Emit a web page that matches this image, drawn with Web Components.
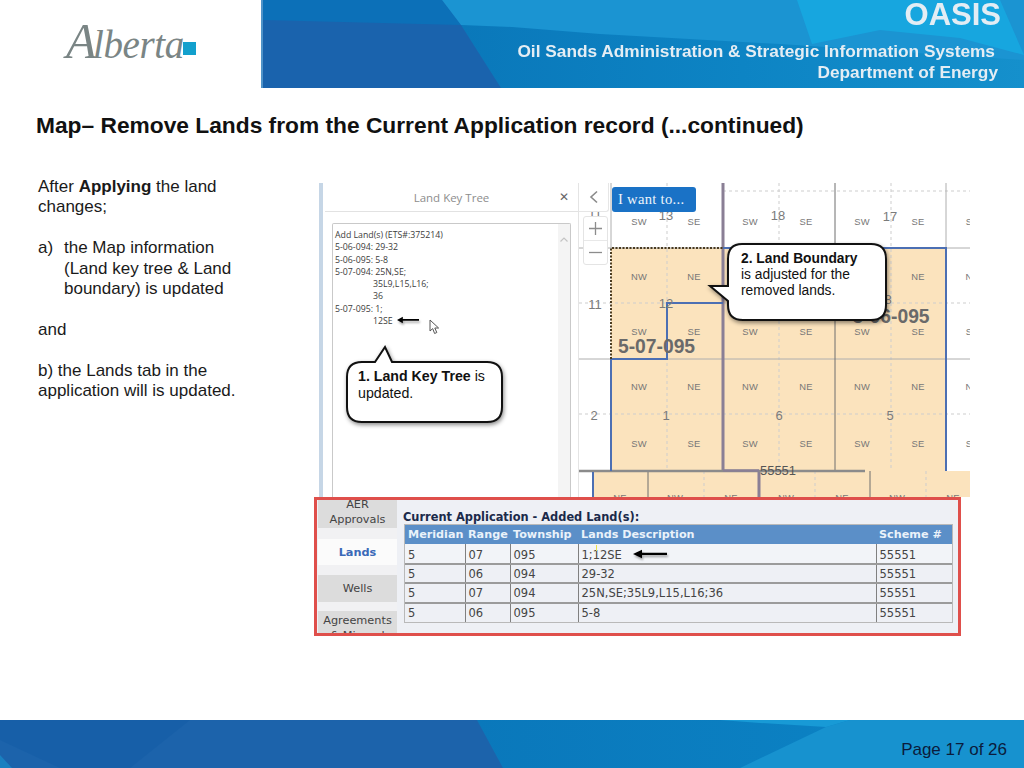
<!DOCTYPE html>
<html lang="en"><head><meta charset="utf-8"><title>OASIS Map</title>
<style>
html,body{margin:0;padding:0;background:#fff}
body{width:1024px;height:768px;overflow:hidden;display:flex;flex-direction:column;font-family:"Liberation Sans",Arial,sans-serif}
</style></head><body>
<oasis-header></oasis-header>
<slide-title>Map– Remove Lands from the Current Application record (...continued)</slide-title>
<slide-body>
  <slide-notes>
    <p-line>After <b>Applying</b> the land changes;</p-line>
    <note-item label="a)">the Map information (Land key tree &amp; Land boundary) is updated</note-item>
    <p-line>and</p-line>
    <p-line>b) the Lands tab in the application will is updated.</p-line>
  </slide-notes>
  <slide-figure>
    <land-tree></land-tree>
    <land-map></land-map>
    <lands-table></lands-table>
  </slide-figure>
</slide-body>
<oasis-footer>Page 17 of 26</oasis-footer>
<script>
function def(name, html, setup){
  customElements.define(name, class extends HTMLElement{
    constructor(){super();this.attachShadow({mode:'open'}).innerHTML=html;}
    connectedCallback(){ if(setup) setup(this.shadowRoot,this); }
  });
}
const ARROW=`<svg width="100%" height="100%" viewBox="0 0 34 10" preserveAspectRatio="none" style="filter:drop-shadow(1px 2px 1px rgba(0,0,0,.35));display:block"><path d="M0 5 L9 .8 L9 3.8 L34 3.8 L34 6 L9 6 L9 9.2 Z" fill="#000"/></svg>`;

def('oasis-header',`<style>
:host{display:flex;height:88px;flex:none;background:#fff}
.logo{width:261px;flex:none;display:flex;align-items:flex-start;padding:21px 0 0 66px;box-sizing:border-box;gap:0}
.word{font:italic 400 39px/40px "Liberation Serif",serif;color:#7a8585;letter-spacing:-.4px;white-space:nowrap}
.word i{font-size:50px;line-height:40px;font-style:italic;letter-spacing:-3.500px}
.sq{width:13px;height:13px;background:#12a0cd;margin:21px 0 0 -1px;flex:none}
.band{flex:1;position:relative;display:flex;flex-direction:column;align-items:flex-end;color:#eaf2f8;font-weight:700;overflow:hidden;filter:blur(.25px)}
svg{position:absolute;inset:0}
.t{position:relative}
.o{font-size:31px;line-height:30px;margin:0 23px 0 0;color:#e3edf4}
.s{font-size:17.3px;line-height:21px;margin:11px 29px 0 0;color:#e4edf4}
.d{font-size:17.3px;line-height:21px;margin:0 26px 0 0;color:#e4edf4}
</style>
<div class="logo"><div class="word"><i>A</i>lberta</div><div class="sq"></div></div>
<div class="band">
<svg viewBox="261 0 763 88" width="763" height="88"><defs><linearGradient id="g" x1="0" x2="1"><stop offset="0" stop-color="#0a78ba"/><stop offset=".5" stop-color="#0d84c4"/><stop offset="1" stop-color="#1590cc"/></linearGradient></defs>
<rect x="261" width="763" height="88" fill="#1a63ad"/>
<rect x="261" width="2" height="88" fill="#4f93c9"/>
<polygon points="263,0 442,0 461,25 263,20" fill="#0c70b8"/>
<polygon points="461,25 1024,25 1024,88 501,88" fill="url(#g)"/>
<polygon points="442,0 1024,0 1024,60 780,44 600,34 512,27 461,25" fill="#1b94d2"/>
<polygon points="797,0 1000,0 1024,55 960,38 880,30 812,44" fill="#17a6df"/>
</svg>
<div class="t o">OASIS</div><div class="t s">Oil Sands Administration &amp; Strategic Information Systems</div><div class="t d">Department of Energy</div>
</div>`);

def('slide-title',`<style>:host{display:block;flex:none;padding:24px 0 0 36px;height:63px;box-sizing:border-box;font-weight:700;font-size:22.75px;line-height:26px;color:#111;white-space:nowrap}</style><slot></slot>`);

def('slide-body',`<style>:host{display:flex;flex:1;min-height:0;align-items:flex-start}</style><slot></slot>`);

def('slide-notes',`<style>:host{display:flex;flex-direction:column;gap:20.4px;width:314px;box-sizing:border-box;padding:26px 70px 0 38px;flex:none;font-size:17px;line-height:20.4px;color:#1a1a1a}</style><slot></slot>`);
def('p-line',`<style>:host{display:block}</style><slot></slot>`);
def('note-item',`<style>:host{display:flex}.l{width:26px;flex:none}</style><span class="l"></span><span><slot></slot></span>`,(r,h)=>{r.querySelector('.l').textContent=h.getAttribute('label')});

def('slide-figure',`<style>:host{display:grid;grid-template-columns:11px 254px 391px;grid-template-rows:314px auto;margin:32px 0 0 0;width:656px;position:relative}
::slotted(land-tree){grid-column:2;grid-row:1}::slotted(land-map){grid-column:3;grid-row:1}::slotted(lands-table){grid-column:1 / -1;grid-row:2}</style><slot></slot>`);

def('call-out',`<style>:host{display:block;position:absolute;box-sizing:border-box;font-family:"Liberation Sans",Arial,sans-serif;color:#111;z-index:3}
svg{position:absolute;left:0;top:0;overflow:visible;filter:drop-shadow(1px 2px 2px rgba(0,0,0,.45))}
.t{position:relative;display:block}</style><svg><path fill="#fff" stroke="#111" stroke-width="2"/></svg><span class="t"><slot></slot></span>`,
(r,h)=>{r.querySelector('path').setAttribute('d',h.getAttribute('shape'));});

def('land-tree',`<style>
:host{display:block;position:relative;height:314px;background:#fff;font-family:"Open Sans",sans-serif;overflow:visible}
.strip{position:absolute;left:-6px;top:0;bottom:0;width:4px;background:#c6d6e6}
.head{height:28px;border-bottom:1px solid #e2e2e2;display:flex;align-items:center;justify-content:center;color:#8d8d8d;font-size:11.5px;position:relative;margin-right:1px}
.x{position:absolute;left:234px;top:6px;font-size:12px;color:#666;line-height:16px}
.rule{position:absolute;right:0;top:0;bottom:0;width:1px;background:#e4e4e4}
.box{position:absolute;left:7px;top:40px;width:239px;height:274px;border:1px solid #c9c9c9;border-bottom:0;border-radius:2px 2px 0 0;box-sizing:border-box;padding:5px 0 0 2px;font-size:8.75px;line-height:12.25px;color:#3c3c3c;white-space:nowrap}
.sb{position:absolute;right:0;top:0;bottom:0;width:12px;background:#f4f4f4}
.sb svg{position:absolute;left:2px;top:13px}
.in{padding-left:38px}
.a{position:absolute;left:64px;top:92px;width:22px;height:8px}
.c{position:absolute;left:96px;top:95px}
</style>
<div class="strip"></div><div class="rule"></div>
<div class="head">Land Key Tree<span class="x">✕</span></div>
<div class="box"><div class="sb"><svg width="8" height="5"><path d="M.5 4.5 4 1l3.5 3.5" fill="none" stroke="#c4c4c4" stroke-width="1.2"/></svg></div>
<div>Add Land(s) (ETS#:375214)</div><div>5-06-094: 29-32</div><div>5-06-095: 5-8</div><div>5-07-094: 25N,SE;</div><div class="in">35L9,L15,L16;</div><div class="in">36</div><div>5-07-095: 1;</div><div class="in">12SE</div>
<div class="a">${ARROW}</div>
<svg class="c" width="11" height="16" viewBox="0 0 11 16"><path d="M1 1v11l2.7-2.4L5.600 14.500l2.200-1-2-4.500h3.800z" fill="#fff" stroke="#555" stroke-width="1"/></svg>
</div>
<call-out style="left:21px;top:164px;width:157px;height:76px;padding:21px 0 0 12px;font-size:14.2px;line-height:17px" shape="M16 15 L29 15 L39 0 L46 15 L141 15 Q156 15 156 30 L156 60 Q156 75 141 75 L16 75 Q1 75 1 60 L1 30 Q1 15 16 15Z"><b>1. Land Key Tree</b> is<br>updated.</call-out>`);

def('land-map',`<style>
:host{display:block;position:relative;height:314px;overflow:hidden;background:#fff;font-family:"Liberation Sans",Arial,sans-serif}
svg.g{position:absolute;inset:0}
.lb{position:absolute;transform:translate(-50%,-50%);white-space:nowrap;color:#777;font-size:9.4px;letter-spacing:.2px;line-height:11px}
.n{font-size:13px;color:#7b7b7b;letter-spacing:0}
.big{font-size:19.3px;font-weight:700;color:#6a6a6a;letter-spacing:0;line-height:22px}
.btn{position:absolute;left:33px;top:4px;width:84px;height:25px;border-radius:3px;background:#1a72c6;color:#eef5fb;font:14.6px/25px "Liberation Serif",serif;letter-spacing:.3px;box-sizing:border-box;padding-left:6px;white-space:nowrap}
.back{position:absolute;left:0;top:0;width:29px;height:28px;background:#fff;border-right:1px solid #e6e6e6;border-bottom:1px solid #e6e6e6;border-radius:0 0 3px 0;display:flex;align-items:center;justify-content:center}
.zoom{position:absolute;left:4px;top:33px;width:25px;height:49px;background:#fff;border:1px solid #e4e4e4;border-radius:3px;box-sizing:border-box;display:flex;flex-direction:column}
.zoom div{flex:1;display:flex;align-items:center;justify-content:center}
.zoom div+div{border-top:1px solid #e8e8e8}
</style>
<svg class="g" width="391" height="314" viewBox="579 183 391 314">
<rect x="611" y="248" width="335" height="223" fill="#fbe3bd"/>
<rect x="593" y="471" width="377" height="26" fill="#fbe3bd"/>
<g fill="none" stroke="#cdcdcd" stroke-dasharray="3 3" stroke-width="1">
<path d="M723 191H970M579 303H970M579 414H970M667 183V471M779 183V471M891 183V471M704 471V497M815 471V497M926 471V497"/></g>
<g fill="none" stroke="#aeaeae" stroke-width="1"><path d="M579 248H970M579 359H970M611 183V248M946 183V248"/></g>
<g fill="none" stroke="#6e6e6e" stroke-width="1"><path d="M835 183V471M648 471V497M870 471V497"/></g>
<path d="M723 183V471M759 471V497" stroke="#8a7f95" stroke-width="3" fill="none"/>
<path d="M579 471H865" stroke="#8b8b8b" stroke-width="2.500" fill="none"/>
<path d="M723 470.500H759" stroke="#8a7f95" stroke-width="2.500" fill="none"/>
<path d="M723 248H946V471M611 471V359H667V303H723M593 472V497" stroke="#4c6fb3" stroke-width="2" fill="none"/>
<path d="M611 359V248H723" stroke="#4a3b20" stroke-width="2" stroke-dasharray="2 1.500" fill="none"/>
</svg>
<div class="back"><svg width="10" height="14"><path d="M8 1.500 2 7l6 5.500" fill="none" stroke="#8a8a8a" stroke-width="1.600"/></svg></div>
<div class="btn">I want to...</div>
<div class="zoom"><div><svg width="13" height="13"><path d="M6.500 0v13M0 6.500h13" stroke="#8c8c8c" stroke-width="1.300"/></svg></div><div><svg width="13" height="3"><path d="M0 1.500h13" stroke="#8c8c8c" stroke-width="1.300"/></svg></div></div>
<call-out style="left:131px;top:60px;width:178px;height:78px;padding:8px 0 0 31px;font-size:13.800px;line-height:16px" shape="M32 1 L161 1 Q176 1 176 16 L176 62 Q176 77 161 77 L33 77 Q18 77 18 62 L18 58 L0 43 L18 43 L18 16 Q18 1 32 1Z"><b>2. Land Boundary</b><br>is adjusted for the<br>removed lands.</call-out>`,
(r)=>{
  if(r.querySelector('.lb'))return;
  const add=(t,x,y,c)=>{const s=document.createElement('span');s.className='lb '+(c||'');s.textContent=t;s.style.left=(x-579)+'px';s.style.top=(y-183)+'px';r.insertBefore(s,r.querySelector('.back'));};
  const row=(y,a,b,xs)=>xs.forEach((x,i)=>add(i%2?b:a,x,y));
  row(221,'SW','SE',[639,694,750,806,862,918]);add('S',969,221);
  row(276,'NW','NE',[639,694,750,806,862,918]);add('N',969,276);
  row(331,'SW','SE',[639,694,750,806,862,918]);add('S',969,331);
  row(386,'NW','NE',[639,694,750,806,862,918]);add('N',969,386);
  row(443,'SW','SE',[639,694,750,806,862,918]);add('S',969,443);
  row(497,'NE','NW',[620,675,731,786,842,897,953]);
  [['13',666,215],['18',778,215],['17',890,216],['11',595,213],['11',595,304],['12',666,303],['8',888,299],['2',594,415],['1',666,415],['6',779,415],['5',890,415]].forEach(a=>add(a[0],a[1],a[2],'n'));
  add('55551',778,470,'n d');r.querySelector('.d').style.color='#555';
  add('5-06-095',891,317,'big');add('5-07-095',656.5,347,'big');
});

def('lands-table',`<style>
:host{display:block;width:647px;height:139px;box-sizing:border-box;border:3px solid #df4f4b;background:#eef0f5;position:relative;overflow:hidden;font-family:"DejaVu Sans",Verdana,sans-serif;z-index:4}
.wrap{display:flex;height:100%}
.tabs{width:79px;margin-left:1px;flex:none;display:flex;flex-direction:column;font-size:11.300px;line-height:15px;color:#444;text-align:center}
.tabs>div{flex:none}
.tb{background:#dcdcdc;display:flex;align-items:center;justify-content:center}
.t1{height:28px}.t1 span{margin-top:-5px}
.gp{height:11px;background:#f1f1f3}
.t2{height:26px;background:#fbfbfb;color:#3a69b8;font-weight:700}
.t3{height:27px}
.t4{height:40px;align-items:flex-start!important;padding-top:2px}
.main{flex:1;padding:10px 0 0 6px;position:relative}
h3{margin:0 0 1px 0;font-size:11.4px;line-height:14px;color:#1b2a4a;font-weight:700;white-space:nowrap}
table{border-collapse:collapse;table-layout:fixed;width:547px;margin-left:2px;font-size:11.500px;color:#444;outline:1px solid #b9b9b9}
th{background:#5b8fc8;color:#eaf2fa;text-align:left;height:19px;padding:0 0 0 3px;font-weight:700;font-size:11.200px;white-space:nowrap;border:0}
td{height:19.500px;padding:1px 0 0 3px;border-top:2px solid #9b9b9b;border-left:1px solid #808080;box-sizing:border-box;white-space:nowrap}
td:first-child{border-left:0}
tr.a td{border-top:0;padding-top:3px;background:#f2f4f8}
.ar{position:absolute;left:236px;top:49px;width:34px;height:10px}
.y{position:absolute;left:199px;top:45px;width:1px;height:6px;background:#e8e04a}
</style>
<div class="wrap"><div class="tabs">
<div class="tb t1"><span>AER<br>Approvals</span></div><div class="gp"></div>
<div class="tb t2">Lands</div><div class="gp" style="height:10px"></div>
<div class="tb t3">Wells</div><div class="gp" style="height:9px"></div>
<div class="tb t4"><span>Agreements<br>&amp; Mineral</span></div></div>
<div class="main"><h3>Current Application - Added Land(s):</h3>
<table><colgroup><col style="width:60px"><col style="width:45px"><col style="width:68px"><col style="width:298px"><col style="width:76px"></colgroup>
<tr><th>Meridian</th><th>Range</th><th>Township</th><th>Lands Description</th><th>Scheme #</th></tr>
<tr class="a"><td>5</td><td>07</td><td>095</td><td>1;12SE</td><td>55551</td></tr>
<tr><td>5</td><td>06</td><td>094</td><td>29-32</td><td>55551</td></tr>
<tr><td>5</td><td>07</td><td>094</td><td>25N,SE;35L9,L15,L16;36</td><td>55551</td></tr>
<tr><td>5</td><td>06</td><td>095</td><td>5-8</td><td>55551</td></tr></table>
<div class="ar">${ARROW}</div><div class="y"></div></div></div>`);

def('oasis-footer',`<style>
:host{display:block;flex:none;height:48px;margin-top:auto;position:relative;color:#0b1c3c;font-size:17px}
svg{position:absolute;inset:0}
.t{position:absolute;right:17px;top:20px;line-height:20px}
</style><svg width="1024" height="48" viewBox="0 720 1024 48"><defs><linearGradient id="f" x1="0" x2="1"><stop offset="0" stop-color="#0a78bb"/><stop offset=".6" stop-color="#0b80c2"/><stop offset="1" stop-color="#128bc9"/></linearGradient></defs>
<rect y="720" width="1024" height="48" fill="#1c63ab"/>
<polygon points="0,720 190,720 130,768 60,768 0,740" fill="#175fa8"/>
<polygon points="0,755 12,768 0,768" fill="#1a80c0"/>
<polygon points="477,720 1024,720 1024,768 503,768" fill="url(#f)"/>
<polygon points="826,727 850,720 1024,720 1024,768 740,768" fill="#1792cf"/>
<polygon points="720,720 850,720 826,727 760,723" fill="#189ad6"/></svg><span class="t"><slot></slot></span>`);
</script>
</body></html>
